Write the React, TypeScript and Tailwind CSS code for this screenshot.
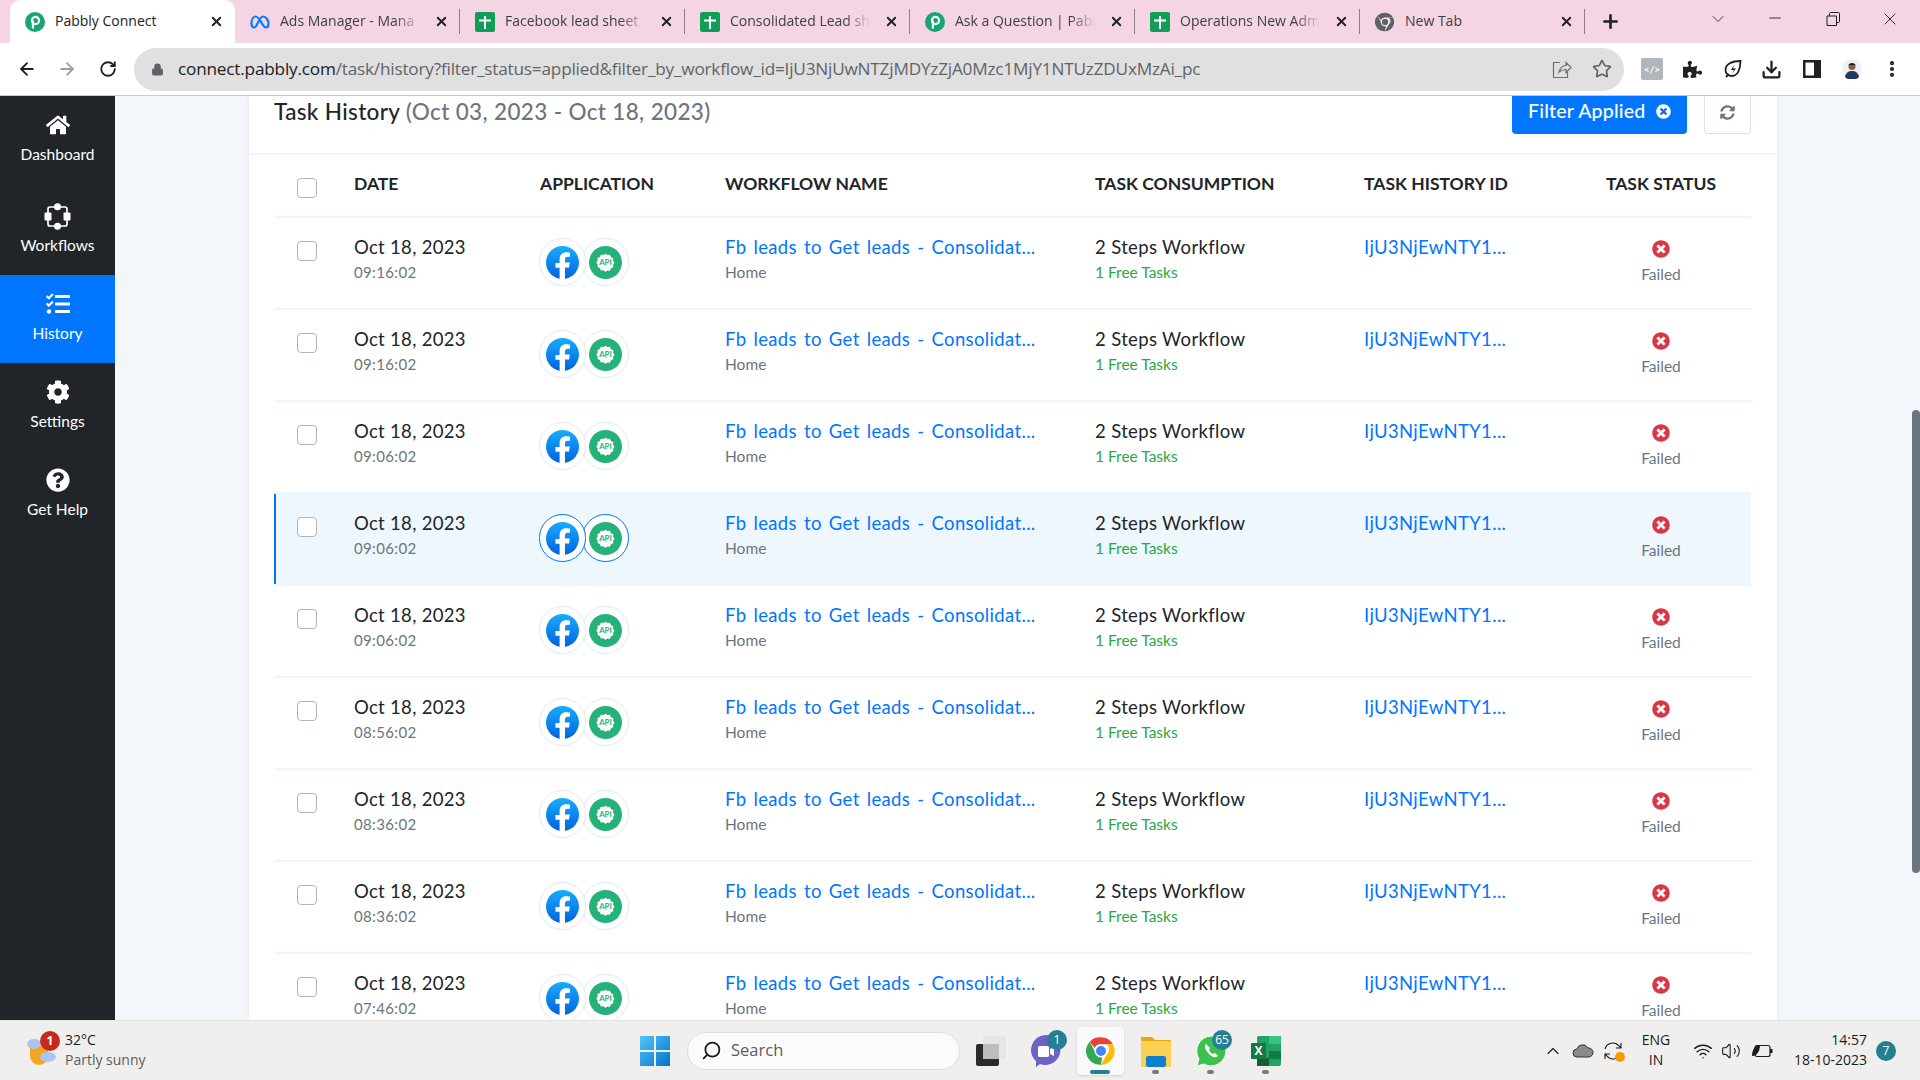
import React from "react";
import { FaHome, FaTasks, FaCog, FaQuestionCircle, FaTimesCircle, FaSyncAlt, FaPuzzlePiece } from "react-icons/fa";
import { ArrowLeft, ArrowRight, RotateCw, Lock, Star, ChevronDown, Minus, X, Plus, Search, ChevronUp, Wifi, Volume2, Download, MoreVertical } from "lucide-react";

const Pabbly = ({ s = 20 }: { s?: number }) => (
  <svg width={s} height={s} viewBox="0 0 20 20" className="shrink-0">
    <circle cx="10" cy="10" r="10" fill="#17a673" />
    <circle cx="10.5" cy="8.5" r="3.6" fill="none" stroke="#fff" strokeWidth="2.2" />
    <rect x="6.8" y="8.5" width="2.2" height="8" fill="#fff" />
  </svg>
);
const Sheets = () => (
  <svg width="20" height="20" viewBox="0 0 20 20" className="shrink-0">
    <rect width="20" height="20" rx="2" fill="#0f9d58" />
    <rect x="9" y="4" width="2" height="13" fill="#fff" />
    <rect x="4" y="7.5" width="12" height="2" fill="#fff" />
  </svg>
);
const Meta = () => (
  <svg width="20" height="20" viewBox="0 0 20 20" className="shrink-0">
    <path d="M5.500 4.500c-2.500 0-4 3.500-4 7 0 2.500 1 4 2.800 4 3 0 4.500-11 8.700-11 3 0 5.500 3.500 5.500 7.500 0 2.200-1 3.500-2.700 3.500-3.500 0-5.500-11-10.300-11z" fill="none" stroke="#0a7cff" strokeWidth="2.200" />
  </svg>
);
const ChromeLogo = ({ s = 20, mono = false }: { s?: number; mono?: boolean }) => (
  <svg width={s} height={s} viewBox="0 0 24 24" className="shrink-0">
    <path d="M12 1a11 11 0 0 1 9.500 5.500H12a5.500 5.500 0 0 0-5 3L3 4.500A11 11 0 0 1 12 1z" fill={mono ? "#5f6368" : "#ea4335"} />
    <path d="M21.500 6.500A11 11 0 0 1 12 23l4.700-8.200a5.500 5.500 0 0 0 0-8.300z" fill={mono ? "#5f6368" : "#fbbc04"} />
    <path d="M12 23A11 11 0 0 1 3 4.500L7.500 13a5.500 5.500 0 0 0 5.500 4l-1 6z" fill={mono ? "#5f6368" : "#34a853"} />
    <circle cx="12" cy="12" r="4.600" fill={mono ? "#5f6368" : "#4285f4"} stroke="#fff" strokeWidth="1.200" />
  </svg>
);
const Workflow = () => (
  <svg width="27" height="27" viewBox="0 0 27 27">
    <rect x="4" y="4" width="19" height="19" rx="2" fill="none" stroke="#fff" strokeWidth="1.700" />
    <circle cx="13.500" cy="3.700" r="3.500" fill="#fff" />
    <circle cx="13.500" cy="23.300" r="3.500" fill="#fff" />
    <rect x="0.500" y="9.500" width="7" height="8" rx="1" fill="#fff" />
    <rect x="19.500" y="9.500" width="7" height="8" rx="1" fill="#fff" />
  </svg>
);
const Facebook = () => (
  <svg width="33" height="33" viewBox="0 0 40 40">
    <defs>
      <linearGradient id="fb" x1="0" y1="0" x2="0" y2="1">
        <stop offset="0" stopColor="#18acfe" />
        <stop offset="1" stopColor="#0163e0" />
      </linearGradient>
    </defs>
    <circle cx="20" cy="20" r="20" fill="url(#fb)" />
    <path d="M16.500 40V26.500H11.500v-6h5v-4.500c0-5.500 3.200-8.500 8-8.500 2.300 0 4.500.4 4.500.4v5.100h-2.600c-2.600 0-3.400 1.600-3.400 3.200v3.800h5.800l-.9 6h-4.900V40z" fill="#fff" />
  </svg>
);
const ApiBadge = () => (
  <svg width="33" height="33" viewBox="0 0 40 40">
    <circle cx="20" cy="20" r="20" fill="#25b27a" />
    <path d="M20 7.500l3.200 2.300 3.900-.4 1.600 3.600 3.600 1.600-.4 3.900 2.300 3.200-2.300 3.200.4 3.900-3.600 1.600-1.600 3.600-3.900-.4L20 35.500l-3.200-2.300-3.900.4-1.600-3.600-3.600-1.600.4-3.900L5.800 21.500l2.300-3.200-.4-3.900 3.600-1.600 1.600-3.600 3.900.4z" fill="#fff" transform="translate(4.300 3.400) scale(.78)" />
    <text x="20" y="23.500" textAnchor="middle" fontSize="9.500" fontWeight="700" fill="#25b27a" fontFamily="Lato, sans-serif">API</text>
  </svg>
);
const WinLogo = () => (
  <svg width="30" height="30" viewBox="0 0 30 30">
    <defs>
      <linearGradient id="win" x1="0" y1="0" x2="1" y2="1">
        <stop offset="0" stopColor="#4fc8f8" />
        <stop offset="1" stopColor="#0572c9" />
      </linearGradient>
    </defs>
    <path d="M0 0h14v14H0zM16 0h14v14H16zM0 16h14v14H0zM16 16h14v14H16z" fill="url(#win)" />
  </svg>
);

const tabs: { icon: React.ReactNode; title: string; active?: boolean }[] = [
  { icon: <Pabbly />, title: "Pabbly Connect", active: true },
  { icon: <Meta />, title: "Ads Manager - Mana" },
  { icon: <Sheets />, title: "Facebook lead sheet" },
  { icon: <Sheets />, title: "Consolidated Lead sh" },
  { icon: <Pabbly />, title: "Ask a Question | Pabl" },
  { icon: <Sheets />, title: "Operations New Adm" },
  { icon: <ChromeLogo mono />, title: "New Tab" },
];

const rows = [
  { time: "09:16:02" },
  { time: "09:16:02" },
  { time: "09:06:02" },
  { time: "09:06:02", active: true },
  { time: "09:06:02" },
  { time: "08:56:02" },
  { time: "08:36:02" },
  { time: "08:36:02" },
  { time: "07:46:02" },
];

const nav = [
  { icon: <FaHome size={24} />, label: "Dashboard" },
  { icon: <Workflow />, label: "Workflows" },
  { icon: <FaTasks size={24} />, label: "History", active: true },
  { icon: <FaCog size={24} />, label: "Settings" },
  { icon: <FaQuestionCircle size={24} />, label: "Get Help" },
];

const grid = "grid grid-cols-[80px_185px_186px_370px_269px_208px_178px]";

const CheckBox = () => <div className="w-[20px] h-[20px] rounded-[4px] border border-[#adb5bd] bg-white" />;

function Row({ time, active }: { time: string; active?: boolean }) {
  return (
    <div className={`${grid} h-[92px] shrink-0 items-start border-t-2 border-[#eef5fc] ${active ? "bg-[#eef6fe]" : ""} relative`}>
      {active && <div className="absolute left-0 top-0 bottom-0 w-[2px] bg-[#0076ff]" />}
      <div className="pl-[23px] pt-[23px]"><CheckBox /></div>
      <div className="pt-[17px]">
        <div className="text-[18.500px] leading-[24px] text-[#212529] tracking-[0.3px]">Oct 18, 2023</div>
        <div className="text-[15px] leading-[20px] mt-[3px] text-[#6c757d] tracking-[0.35px]">{time}</div>
      </div>
      <div className="pt-[20px] flex">
        <div className={`w-[47px] h-[48px] rounded-full border flex items-center justify-center z-10 bg-white ${active ? "border-[#0076ff]" : "border-[#dfe8fa]"}`}><Facebook /></div>
        <div className={`w-[47px] h-[48px] rounded-full border flex items-center justify-center -ml-[4px] bg-white ${active ? "border-[#0076ff]" : "border-[#dfe8fa]"}`}><ApiBadge /></div>
      </div>
      <div className="pt-[17px]">
        <div className="text-[18.500px] leading-[24px] text-[#0076ff] tracking-[0.35px] [word-spacing:2px] whitespace-nowrap">Fb leads to Get leads - Consolidat...</div>
        <div className="text-[15.500px] leading-[20px] mt-[3px] text-[#6c757d]">Home</div>
      </div>
      <div className="pt-[17px]">
        <div className="text-[18.500px] leading-[24px] text-[#212529] tracking-[0.35px]">2 Steps Workflow</div>
        <div className="text-[15.500px] leading-[20px] mt-[3px] text-[#28a745]">1 Free Tasks</div>
      </div>
      <div className="pt-[17px] text-[18.500px] leading-[24px] text-[#0076ff] tracking-[0.35px]">IjU3NjEwNTY1...</div>
      <div className="pt-[22px] flex flex-col items-center text-[#6c757d]">
        <FaTimesCircle size={18} className="text-[#dc3545]" />
        <div className="text-[15.500px] leading-[20px] mt-[6px]">Failed</div>
      </div>
    </div>
  );
}

function Slot({ children, badge, tile, dot }: { children: React.ReactNode; badge?: string; tile?: boolean; dot?: "big" | "small" }) {
  return (
    <div className="w-[55px] h-[60px] flex items-center justify-center relative">
      {tile && <div className="absolute left-[4px] top-[6px] w-[47px] h-[48px] rounded-[4px] bg-[#fafafa] shadow-sm" />}
      <div className="relative">{children}</div>
      {badge && (
        <div className="absolute top-[9px] right-[6px] min-w-[20px] h-[20px] px-[3px] rounded-full bg-[#247f94] text-white text-[12px] flex items-center justify-center">{badge}</div>
      )}
      {dot === "big" && <div className="absolute bottom-[7px] left-[17px] w-[20px] h-[4px] rounded-full bg-[#247f94]" />}
      {dot === "small" && <div className="absolute bottom-[7px] left-[24px] w-[7px] h-[4px] rounded-full bg-[#7a7a7a]" />}
    </div>
  );
}

export default function App() {
  return (
    <div className="w-[1920px] h-[1080px] overflow-hidden flex flex-col relative font-['Lato',sans-serif] bg-white">
      {/* tab strip */}
      <div className="h-[43px] shrink-0 bg-[#f5d5e4] flex items-stretch pl-[10px] font-['Open_Sans',sans-serif] text-[14px] text-[#3c4043]">
        {tabs.map((t, i) => (
          <div key={i} className={`w-[225px] shrink-0 h-[43px] flex items-center pl-[15px] relative ${t.active ? "bg-white rounded-t-[10px] text-[#202124]" : ""}`}>
            {t.icon}
            <div className={`ml-[10px] w-[141px] pb-[2px] overflow-hidden whitespace-nowrap ${t.active || t.title === "New Tab" ? "" : "[mask-image:linear-gradient(to_right,black_82%,transparent)]"}`}>{t.title}</div>
            <X size={15} strokeWidth={3} className="ml-[13px] text-[#202124]" />
            {!t.active && <div className="absolute right-0 top-[9px] h-[25px] w-px bg-[#8d8088]" />}
          </div>
        ))}
        <Plus size={21} strokeWidth={3} className="ml-[15px] self-center text-[#202124]" />
        <ChevronDown size={20} strokeWidth={1} className="ml-[87px] mt-[9px] text-[#202124]" />
        <Minus size={18} strokeWidth={1.2} className="ml-[38px] mt-[9px] text-[#202124]" />
        <svg width="14" height="14" viewBox="0 0 14 14" className="ml-[42px] mt-[12px]"><path d="M1 4h9.500v9.500H1zM3.500 4V1.500c0-.5.5-1 1-1h8c.5 0 1 .5 1 1v8c0 .5-.5 1-1 1h-2" fill="none" stroke="#202124" strokeWidth="1" /></svg>
        <X size={20} strokeWidth={1.1} className="ml-[40px] mt-[9px] text-[#202124]" />
      </div>
      {/* toolbar */}
      <div className="h-[53px] shrink-0 bg-white border-b border-[#c9cccf] flex items-center text-[#202124]">
        <ArrowLeft size={20} strokeWidth={2.2} className="ml-[17px]" />
        <ArrowRight size={20} strokeWidth={2.2} className="ml-[20px] text-[#9c9ea1]" />
        <RotateCw size={18} strokeWidth={2.4} className="ml-[22px]" />
        <div className="ml-[17px] w-[1490px] h-[43px] rounded-full bg-[#e0e0e0] flex items-center">
          <Lock size={13} fill="#5f6368" strokeWidth={2} className="ml-[17px] text-[#5f6368]" />
          <div className="ml-[14px] text-[17.200px] font-['Open_Sans',sans-serif] whitespace-nowrap tracking-[-0.2px]">
            <span className="text-[#202124]">connect.pabbly.com</span>
            <span className="text-[#5f6368]">/task/history?filter_status=applied&amp;filter_by_workflow_id=IjU3NjUwNTZjMDYzZjA0Mzc1MjY1NTUzZDUxMzAi_pc</span>
          </div>
          <svg width="20" height="20" viewBox="0 0 20 20" className="ml-auto"><path d="M8 3.500H1.500v15h14V13M7 13c1-4 4-6.500 7-6.500V3.500l5 5-5 5v-3c-3 0-5 .500-7 2.500z" fill="none" stroke="#6b6e72" strokeWidth="1.200" /></svg>
          <Star size={20} strokeWidth={2} className="ml-[20px] mr-[12px] text-[#5f6368]" />
        </div>
        <div className="ml-[17px] w-[22px] h-[22px] rounded-[2px] bg-[#b1b5bc] text-white text-[10px] font-bold flex items-center justify-center">&lt;/&gt;</div>
        <FaPuzzlePiece size={19} className="ml-[20px] text-[#202124]" />
        <svg width="20" height="20" viewBox="0 0 20 20" className="ml-[21px]"><path d="M17.500 2C9 2 2.500 5 2.500 11c0 3.500 3 6 6.500 6 5.500 0 8.500-6.500 8.500-15zM3 18l3-3" fill="none" stroke="#202124" strokeWidth="1.800" /><path d="M11 6l-3 5h3l-2 4 4-5.500h-3z" fill="#202124" /></svg>
        <Download size={21} strokeWidth={2.6} className="ml-[18px]" />
        <svg width="18" height="18" viewBox="0 0 18 18" className="ml-[21px]"><path d="M0 0h18v18H0zM2.500 2.500v13H11v-13z" fill="#202124" fillRule="evenodd" /></svg>
        <svg width="20" height="20" viewBox="0 0 20 20" className="ml-[21px]"><circle cx="10" cy="10" r="10" fill="#eef0f2" /><circle cx="10" cy="7.500" r="3.500" fill="#8a5f48" /><path d="M6.500 6.500c0-3 7-3 7 0l-1-.5h-5z" fill="#201612" /><path d="M3 18c1-5 4-6 7-6s6 1 7 6a10 10 0 0 1-14 0z" fill="#1f3a5f" /></svg>
        <MoreVertical size={20} strokeWidth={3} className="ml-[20px]" />
      </div>
      {/* main */}
      <div className="flex-1 min-h-0 flex bg-[#f3f7fb] relative">
        <div className="w-[115px] shrink-0 bg-[#212529] flex flex-col text-white text-[15.500px]">
          {nav.map((n, i) => (
            <div key={n.label} className={`${i === 0 ? "h-[91px]" : "h-[88px]"} shrink-0 flex flex-col items-center pt-[15px] ${n.active ? "bg-[#0076ff]" : ""}`}>
              <div className="h-[28px] flex items-center justify-center">{n.icon}</div>
              <div className="mt-[5px] leading-[20px]">{n.label}</div>
            </div>
          ))}
        </div>
        <div className="ml-[134px] w-[1528px] shrink-0 bg-white shadow-[0_0_6px_rgba(0,0,0,0.06)] flex flex-col overflow-hidden">
          <div className="h-[59px] shrink-0 flex items-start pl-[25px] pr-[26px] border-b-2 border-[#eef5fc]">
            <div className="text-[22.500px] leading-[32px] font-medium text-[#212529] tracking-[0.35px]">
              Task History <span className="text-[#6c757d]">(Oct 03, 2023 - Oct 18, 2023)</span>
            </div>
            <div className="ml-auto flex h-[38px]">
              <div className="w-[175px] bg-[#0076ff] text-white rounded-b-[4px] flex items-center pl-[16px] pb-[8px] text-[19.500px] font-medium tracking-[0.2px] whitespace-nowrap">
                Filter Applied
                <FaTimesCircle size={15} className="ml-[11px] mt-[1px]" />
              </div>
              <div className="w-[47px] ml-[17px] border border-t-0 border-[#dee2e6] rounded-b-[4px] flex items-center justify-center pb-[5px] text-[#6c757d]">
                <FaSyncAlt size={15} />
              </div>
            </div>
          </div>
          <div className="ml-[25px] mr-[26px] flex flex-col">
            <div className={`${grid} h-[61px] shrink-0 items-start font-bold text-[17.500px] text-[#212529]`}>
              <div className="pl-[23px] pt-[23px]"><CheckBox /></div>
              <div className="pt-[17px] leading-[24px]">DATE</div>
              <div className="pt-[17px] leading-[24px] pl-[1px]">APPLICATION</div>
              <div className="pt-[17px] leading-[24px]">WORKFLOW NAME</div>
              <div className="pt-[17px] leading-[24px]">TASK CONSUMPTION</div>
              <div className="pt-[17px] leading-[24px]">TASK HISTORY ID</div>
              <div className="pt-[17px] leading-[24px] text-center">TASK STATUS</div>
            </div>
            {rows.map((r, i) => (
              <Row key={i} time={r.time} active={r.active} />
            ))}
          </div>
        </div>
        <div className="absolute right-0 top-[314px] w-[8px] h-[463px] rounded-full bg-[#6c757d]" />
      </div>
      {/* taskbar */}
      <div className="h-[60px] shrink-0 bg-[#f0efee] border-t border-[#e3e3e3] flex items-center font-['Open_Sans',sans-serif] relative">
        <div className="w-[640px] shrink-0 flex items-center pl-[27px]">
          <div className="w-[30px] h-[30px] relative">
            <svg width="30" height="30" viewBox="0 0 30 30">
              <path d="M3 10h18v10a9 9 0 0 1-18 0z" fill="#f5a623" />
              <ellipse cx="7" cy="8" rx="7" ry="5" fill="#a9c7ee" />
              <ellipse cx="21" cy="21" rx="8" ry="5" fill="#a9c7ee" />
            </svg>
            <div className="absolute -top-[5px] left-[13px] w-[20px] h-[20px] rounded-full bg-[#c42b1c] text-white text-[12px] font-bold flex items-center justify-center">1</div>
          </div>
          <div className="ml-[8px] -mt-[2px] leading-[20px] text-[14px]">
            <div className="text-[#1b1b1b]">32°C</div>
            <div className="text-[#5c5c5c]">Partly sunny</div>
          </div>
        </div>
        <WinLogo />
        <div className="ml-[17px] w-[273px] h-[38px] rounded-full bg-[#fbfbfb] border border-[#dedede] flex items-center pl-[13px] text-[16.500px] text-[#5c5c5c]">
          <Search size={21} strokeWidth={2} className="text-[#1b1b1b] -scale-x-100" />
          <span className="ml-[9px]">Search</span>
        </div>
        <div className="ml-[3px] flex items-center">
          <Slot>
            <svg width="30" height="30" viewBox="0 0 30 30"><rect x="0" y="8" width="23" height="22" rx="2" fill="#2b2b2b" /><rect x="7" y="0" width="23" height="23" rx="2" fill="#e6e6e6" /><rect x="7" y="8" width="16" height="15" fill="#bdbdbd" /></svg>
          </Slot>
          <Slot badge="1">
            <svg width="32" height="36" viewBox="0 0 32 36" className="-ml-[2px]"><path d="M16 2a15 15 0 1 1-5 29l-4 3v-6A15 15 0 0 1 16 2z" fill="#6b64c4" /><rect x="9" y="13" width="11" height="11" rx="1.500" fill="#fff" /><path d="M21 16l4-2v9l-4-2z" fill="#fff" /></svg>
          </Slot>
          <Slot tile dot="big"><ChromeLogo s={30} /></Slot>
          <Slot dot="small">
            <svg width="30" height="32" viewBox="0 0 30 32"><path d="M0 2h11l3 3h16v27H0z" fill="#e9a90e" /><rect y="6" width="30" height="26" fill="#fcd053" /><rect x="5" y="21" width="20" height="11" rx="2" fill="#0f7fd0" /></svg>
          </Slot>
          <Slot badge="65" dot="small">
            <svg width="32" height="34" viewBox="0 0 32 34"><path d="M16 2a15 15 0 0 1 0 30c-3 0-5-1-7-2l-7 2 2-7A15 15 0 0 1 16 2z" fill="#3dc04d" stroke="#fff" strokeWidth="1" /><path d="M11 10c-2 2-1 6 3 10s7 4 9 2l-3-3-2 1c-2-1-3-2-4-4l1-2z" fill="#fff" /></svg>
          </Slot>
          <Slot dot="small">
            <svg width="30" height="30" viewBox="0 0 30 30"><rect x="6" y="0" width="24" height="30" rx="2" fill="#21a366" /><rect x="18" y="0" width="12" height="8" fill="#33c481" /><rect x="18" y="15" width="12" height="8" fill="#107c41" /><rect x="6" y="22" width="12" height="8" fill="#185c37" /><rect y="7" width="15" height="16" rx="1" fill="#107c41" /><text x="7.500" y="19" textAnchor="middle" fontSize="12" fontWeight="700" fill="#fff" fontFamily="Open Sans, sans-serif">X</text></svg>
          </Slot>
        </div>
        <div className="ml-[245px] flex items-center text-[#1b1b1b]">
          <div className="w-[30px] flex justify-center"><ChevronUp size={20} strokeWidth={1.4} /></div>
          <div className="w-[30px] flex justify-center">
            <svg width="22" height="14" viewBox="0 0 22 14"><path d="M5 13a4 4 0 0 1 0-8 6 6 0 0 1 11-1 4.500 4.500 0 0 1 1 9z" fill="#8a8a8a" stroke="#333" strokeWidth="1" /></svg>
          </div>
          <div className="w-[30px] flex justify-center relative">
            <svg width="22" height="22" viewBox="0 0 22 22"><path d="M3 9a8 8 0 0 1 14-3l2 2M19 3v5h-5M19 13a8 8 0 0 1-14 3l-2-2M3 19v-5h5" fill="none" stroke="#1b1b1b" strokeWidth="1.100" /></svg>
            <div className="absolute right-[3px] bottom-[0px] w-[10px] h-[10px] rounded-full bg-[#f59c00]" />
          </div>
          <div className="w-[50px] ml-[3px] -mt-[2px] text-center text-[14px] leading-[20px]"><div>ENG</div><div>IN</div></div>
          <div className="w-[28px] ml-[8px] flex justify-center"><Wifi size={20} strokeWidth={1.700} /></div>
          <div className="w-[28px] flex justify-center"><Volume2 size={20} strokeWidth={1.300} /></div>
          <div className="w-[28px] ml-[3px] flex justify-center">
            <svg width="22" height="14" viewBox="0 0 22 14"><rect x="4" y="1.500" width="15" height="11" rx="2" fill="none" stroke="#1b1b1b" strokeWidth="1.200" /><rect x="19" y="5" width="2.500" height="4" fill="#1b1b1b" /><path d="M1 12c0-6 3-11 8-11 0 6-3 11-8 11z" fill="#1b1b1b" /></svg>
          </div>
          <div className="w-[91px] -mt-[2px] text-right text-[14px] leading-[20px] whitespace-nowrap"><div>14:57</div><div>18-10-2023</div></div>
          <div className="ml-[9px] w-[20px] h-[20px] rounded-full bg-[#247f94] text-white text-[12px] flex items-center justify-center">7</div>
        </div>
      </div>
    </div>
  );
}
